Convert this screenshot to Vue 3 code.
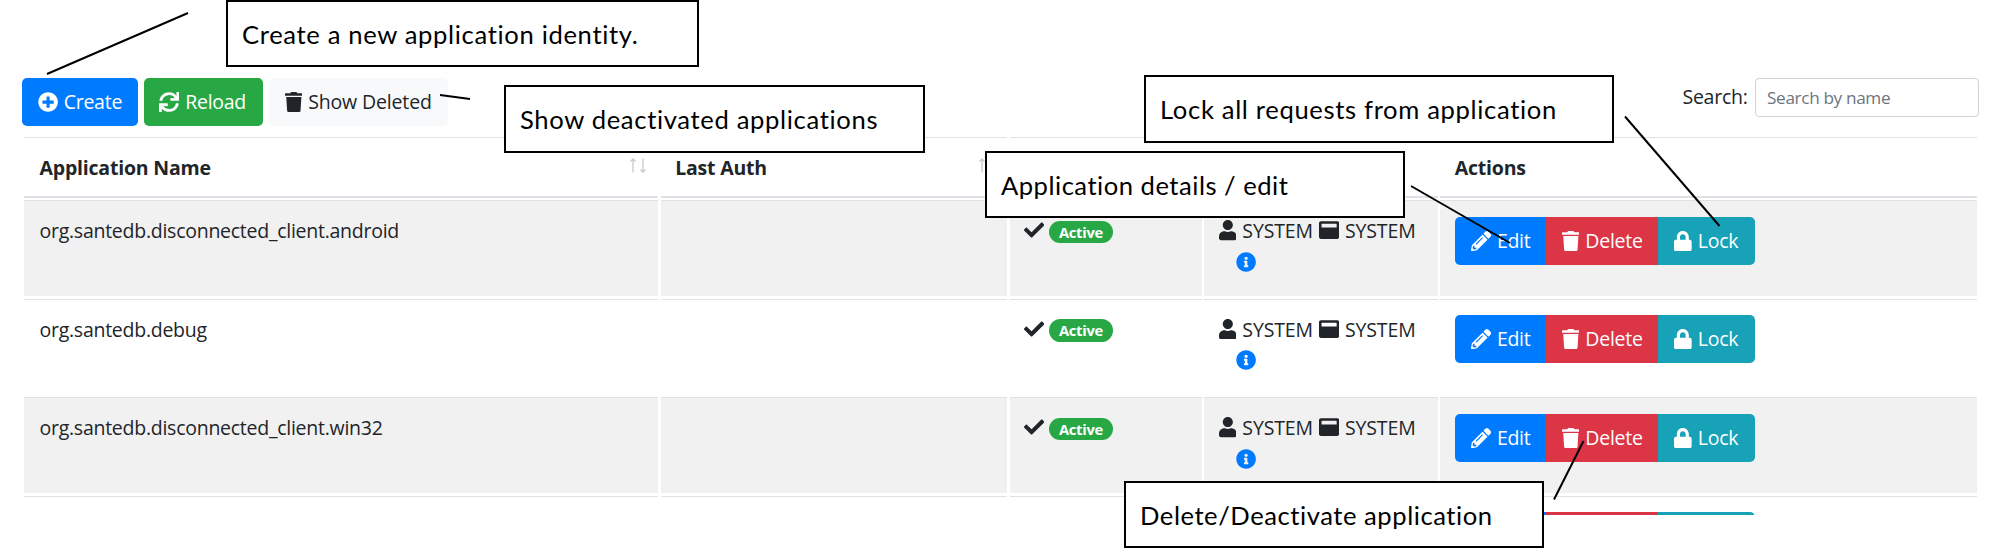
<script setup>
const icons = {
  plus: { w: 512, d: 'M256 8C119 8 8 119 8 256s111 248 248 248 248-111 248-248S393 8 256 8zm144 276c0 6.600-5.400 12-12 12h-92v92c0 6.600-5.400 12-12 12h-56c-6.600 0-12-5.400-12-12v-92h-92c-6.600 0-12-5.400-12-12v-56c0-6.600 5.400-12 12-12h92v-92c0-6.600 5.400-12 12-12h56c6.600 0 12 5.400 12 12v92h92c6.600 0 12 5.400 12 12v56z' },
  sync: { w: 512, d: 'M440.650 12.570l4 82.770A247.160 247.160 0 0 0 255.830 8C134.730 8 33.910 94.920 12.290 209.820A12 12 0 0 0 24.090 224h49.050a12 12 0 0 0 11.670-9.260 175.910 175.910 0 0 1 317-56.940l-101.460-4.860a12 12 0 0 0-12.570 12v47.410a12 12 0 0 0 12 12H500a12 12 0 0 0 12-12V12a12 12 0 0 0-12-12h-47.370a12 12 0 0 0-11.980 12.570zM255.830 432a175.610 175.610 0 0 1-146-77.800l101.800 4.870a12 12 0 0 0 12.570-12v-47.400a12 12 0 0 0-12-12H12a12 12 0 0 0-12 12V500a12 12 0 0 0 12 12h47.350a12 12 0 0 0 12-12.600l-4.150-82.570A247.170 247.170 0 0 0 255.830 504c121.110 0 221.930-86.920 243.550-201.820a12 12 0 0 0-11.800-14.180h-49.050a12 12 0 0 0-11.670 9.260A175.860 175.860 0 0 1 255.830 432z' },
  trash: { w: 448, d: 'M432 32H312l-9.400-18.700A24 24 0 0 0 281.100 0H166.800a23.720 23.720 0 0 0-21.400 13.300L136 32H16A16 16 0 0 0 0 48v32a16 16 0 0 0 16 16h416a16 16 0 0 0 16-16V48a16 16 0 0 0-16-16zM53.200 467a48 48 0 0 0 47.900 45h245.800a48 48 0 0 0 47.900-45L416 128H32z' },
  check: { w: 512, d: 'M173.898 439.404l-166.400-166.400c-9.997-9.997-9.997-26.206 0-36.204l36.203-36.204c9.997-9.998 26.207-9.998 36.204 0L192 312.690 432.095 72.596c9.997-9.997 26.207-9.997 36.204 0l36.203 36.204c9.997 9.997 9.997 26.206 0 36.204l-294.400 294.401c-9.998 9.997-26.207 9.997-36.204-.001z' },
  user: { w: 448, d: 'M224 256c70.700 0 128-57.300 128-128S294.700 0 224 0 96 57.300 96 128s57.300 128 128 128zm89.600 32h-16.700c-22.200 10.200-46.900 16-72.900 16s-50.600-5.800-72.900-16h-16.700C60.200 288 0 348.200 0 422.400V464c0 26.500 21.500 48 48 48h352c26.500 0 48-21.500 48-48v-41.600c0-74.200-60.200-134.400-134.400-134.400z' },
  window: { w: 512, d: 'M464 32H48C21.500 32 0 53.500 0 80v352c0 26.500 21.500 48 48 48h416c26.500 0 48-21.500 48-48V80c0-26.500-21.500-48-48-48zm-16 160H64v-84c0-6.600 5.400-12 12-12h360c6.600 0 12 5.400 12 12v84z' },
  info: { w: 512, d: 'M256 8C119.043 8 8 119.083 8 256c0 136.997 111.043 248 248 248s248-111.003 248-248C504 119.083 392.957 8 256 8zm0 110c23.196 0 42 18.804 42 42s-18.804 42-42 42-42-18.804-42-42 18.804-42 42-42zm56 254c0 6.627-5.373 12-12 12h-88c-6.627 0-12-5.373-12-12v-24c0-6.627 5.373-12 12-12h12v-64h-12c-6.627 0-12-5.373-12-12v-24c0-6.627 5.373-12 12-12h64c6.627 0 12 5.373 12 12v100h12c6.627 0 12 5.373 12 12v24z' },
  pencil: { w: 512, d: 'M497.900 142.100l-46.100 46.100c-4.700 4.700-12.300 4.700-17 0l-111-111c-4.700-4.700-4.700-12.300 0-17l46.100-46.100c18.700-18.700 49.100-18.700 67.900 0l60.100 60.100c18.800 18.700 18.800 49.100 0 67.900zM284.200 99.800L21.600 362.400.4 483.900c-2.900 16.400 11.400 30.600 27.800 27.800l121.500-21.300 262.600-262.600c4.700-4.700 4.700-12.300 0-17l-111-111c-4.800-4.700-12.400-4.700-17.100 0zM124.100 339.900c-5.500-5.500-5.500-14.300 0-19.800l154-154c5.500-5.500 14.300-5.500 19.800 0s5.500 14.300 0 19.800l-154 154c-5.500 5.500-14.300 5.500-19.800 0zM88 424h48v36.300l-64.500 11.300-31.100-31.100L51.700 376H88v48z' },
  lock: { w: 448, d: 'M400 224h-24v-72C376 68.200 307.800 0 224 0S72 68.200 72 152v72H48c-26.500 0-48 21.500-48 48v192c0 26.500 21.500 48 48 48h352c26.500 0 48-21.500 48-48V272c0-26.500-21.500-48-48-48zm-104 0H152v-72c0-39.700 32.300-72 72-72s72 32.300 72 72v72z' },
}
const toolbar = [
  { key: 'create', icon: 'plus', label: 'Create' },
  { key: 'reload', icon: 'sync', label: 'Reload' },
  { key: 'deleted', icon: 'trash', label: 'Show Deleted' },
]
const headers = [
  { label: 'Application Name', sort: true },
  { label: 'Last Auth', sort: true },
  { label: '' },
  { label: '' },
  { label: 'Actions' },
]
const rows = [
  { name: 'org.santedb.disconnected_client.android', key: 'android' },
  { name: 'org.santedb.debug', key: 'debug' },
  { name: 'org.santedb.disconnected_client.win32', key: 'win' },
]
const actions = [
  { key: 'edit', icon: 'pencil', label: 'Edit' },
  { key: 'delete', icon: 'trash', label: 'Delete' },
  { key: 'lock', icon: 'lock', label: 'Lock' },
]
const callouts = [
  { key: 'c-create', text: 'Create a new application identity.' },
  { key: 'c-show', text: 'Show deactivated applications' },
  { key: 'c-lock', text: 'Lock all requests from application' },
  { key: 'c-edit', text: 'Application details / edit' },
  { key: 'c-delete', text: 'Delete/Deactivate application' },
]
const pointers = [
  [47, 74, 188, 13],
  [440, 95, 470, 99],
  [1625, 116.5, 1719.5, 226],
  [1411, 186, 1510, 243],
  [1554, 499.5, 1583.5, 441],
]
</script>

<template>
  <div class="page">
    <div class="toolbar">
      <button v-for="b in toolbar" :key="b.key" class="btn" :class="b.key">
        <svg class="icon" :viewBox="`0 0 ${icons[b.icon].w} 512`"><path :d="icons[b.icon].d" /></svg>
        <span class="txt">{{ b.label }}</span>
      </button>
      <label class="search">
        <span class="search-label">Search:</span>
        <input type="text" placeholder="Search by name" />
      </label>
    </div>

    <div class="grid">
      <div class="row head">
        <div v-for="(h, i) in headers" :key="i" class="cell">
          <span>{{ h.label }}</span>
          <svg v-if="h.sort" class="sort" viewBox="0 0 16 15">
            <path d="M3 14.500V1M.5 3.500L3 1l2.500 2.500M13 .5V14M10.500 11.500L13 14l2.500-2.500" />
          </svg>
        </div>
      </div>
      <div v-for="r in rows" :key="r.key" class="row body">
        <div class="cell"><span class="name">{{ r.name }}</span></div>
        <div class="cell"></div>
        <div class="cell status">
          <svg class="icon check" viewBox="0 0 512 512"><path :d="icons.check.d" /></svg>
          <span class="badge">Active</span>
        </div>
        <div class="cell who">
          <div class="who-line">
            <svg class="icon user" viewBox="0 0 448 512"><path :d="icons.user.d" /></svg>
            <span class="sys">SYSTEM</span>
            <svg class="icon window" viewBox="0 0 512 512"><path :d="icons.window.d" /></svg>
            <span class="sys">SYSTEM</span>
          </div>
          <svg class="icon info" viewBox="0 0 512 512"><path :d="icons.info.d" /></svg>
        </div>
        <div class="cell acts">
          <button v-for="a in actions" :key="a.key" class="btn" :class="a.key">
            <svg class="icon" :viewBox="`0 0 ${icons[a.icon].w} 512`"><path :d="icons[a.icon].d" /></svg>
            <span class="txt">{{ a.label }}</span>
          </button>
        </div>
      </div>
      <div class="row cut">
        <div class="cell"></div>
        <div class="cell"></div>
        <div class="cell"></div>
        <div class="cell"></div>
        <div class="cell acts">
          <span v-for="a in actions" :key="a.key" class="btn" :class="a.key"></span>
        </div>
      </div>
    </div>

    <div v-for="c in callouts" :key="c.key" class="callout" :class="c.key"><span>{{ c.text }}</span></div>
    <svg class="pointers" viewBox="0 0 2000 550">
      <line v-for="(p, i) in pointers" :key="i" :x1="p[0]" :y1="p[1]" :x2="p[2]" :y2="p[3]" />
    </svg>
  </div>
</template>

<style>
body { margin: 0; background: #fff; }
</style>

<style scoped>
.page {
  position: relative;
  width: 2000px;
  height: 550px;
  overflow: hidden;
  box-sizing: border-box;
  padding: 77.6px 21.5px 0 21.5px;
  background: #fff;
  color: #212529;
  font: 19.500px/30px "Open Sans", "Noto Sans", sans-serif;
  letter-spacing: -0.26px;
}
.page * { box-sizing: border-box; }
.icon { display: block; height: 20.200px; flex: none; fill: currentColor; }
.toolbar { display: flex; height: 59px; align-items: flex-start; }
.btn {
  display: flex;
  align-items: center;
  height: 48px;
  margin: 0;
  padding: 0 0 0 16px;
  border: 0;
  border-radius: 5px;
  color: #fff;
  font: inherit;
  letter-spacing: inherit;
  white-space: nowrap;
}
.btn .icon { margin-right: 6px; }
.create { width: 116px; margin-right: 6.500px; background: #007bff; }
.reload { width: 119px; margin-right: 6px; padding-left: 15px; background: #28a745; }
.deleted { width: 178.500px; padding-left: 15.500px; background: #f8f9fa; color: #212529; }
.deleted .txt { letter-spacing: -0.15px; }
.search { display: flex; margin-left: auto; }
.search-label { width: 72.500px; line-height: 38px; }
.search input {
  width: 223.500px;
  height: 39.500px;
  padding: 0 11px;
  border: 1.300px solid #ced4da;
  border-radius: 4px;
  background: #fff;
  font: 17.200px "Open Sans", sans-serif;
  letter-spacing: -0.35px;
}
.search input::placeholder { color: #6c757d; opacity: 1; }

.grid { display: flex; flex-direction: column; gap: 2.500px; margin-left: 2.500px; width: 1952.500px; }
.row { display: grid; grid-template-columns: 634px 346.500px 192px 233.500px 536.500px; gap: 2.500px; }
.cell { border-top: 1.300px solid #dee2e6; padding-left: 14.700px; }
.cell:first-child { padding-left: 15.500px; }
.head { height: 61px; }
.head .cell { display: flex; justify-content: space-between; align-items: flex-start; padding-top: 15px; border-bottom: 2.500px solid #dee2e6; font-weight: 700; letter-spacing: -0.2px; }
.sort { width: 16px; height: 15px; margin: 5px 12.500px 0 0; fill: none; stroke: #c8c9ca; stroke-width: 1.300; }
.body { height: 96px; }
.body .cell { padding-top: 15.400px; }
.body:nth-child(even) .cell { background: #f1f1f1; }
.name { display: block; white-space: nowrap; }
.status { display: flex; align-items: flex-start; }
.check { margin-top: 4px; }
.badge {
  width: 63.500px;
  height: 22.500px;
  margin: 4.300px 0 0 4.800px;
  border-radius: 12px;
  background: #28a745;
  color: #fff;
  font-size: 14.700px;
  font-weight: 700;
  line-height: 23px;
  text-align: center;
}
.who-line { display: flex; align-items: flex-start; }
.who-line .icon { margin-top: 4px; }
.user { margin-right: 6px; }
.window { margin-right: 6px; }
.sys { width: 76.500px; letter-spacing: -0.15px; }
.sys:last-child { width: auto; }
.info { margin: 5.500px 0 0 17px; color: #007bff; }
.body .acts, .cut .acts { display: flex; align-items: flex-start; padding-top: 15.800px; }
.acts .btn { border-radius: 0; }
.acts .edit { width: 91px; border-radius: 5px 0 0 5px; background: #007bff; }
.acts .delete { width: 112.500px; background: #dc3545; }
.acts .lock { width: 97px; border-radius: 0 5px 5px 0; background: #17a2b8; }
.cut { height: 19.500px; overflow: hidden; }

.callout {
  position: absolute;
  display: flex;
  align-items: center;
  border: 2px solid #000;
  background: #fff;
  color: #000;
  font: 25.600px/30px Lato, "Open Sans", sans-serif;
  letter-spacing: 0.66px;
  padding-left: 14px;
  white-space: nowrap;
}
.c-create { left: 226px; top: 0; width: 473px; height: 67px; }
.c-show { left: 504px; top: 85px; width: 421px; height: 68px; }
.c-lock { left: 1144px; top: 75px; width: 470px; height: 68px; }
.c-edit { left: 985px; top: 151px; width: 420px; height: 67px; letter-spacing: 0.5px; }
.c-delete { left: 1124px; top: 481px; width: 420px; height: 67px; letter-spacing: 0.55px; }
.pointers { position: absolute; left: 0; top: 0; width: 2000px; height: 550px; pointer-events: none; }
.pointers line { stroke: #000; stroke-width: 2; }
</style>
